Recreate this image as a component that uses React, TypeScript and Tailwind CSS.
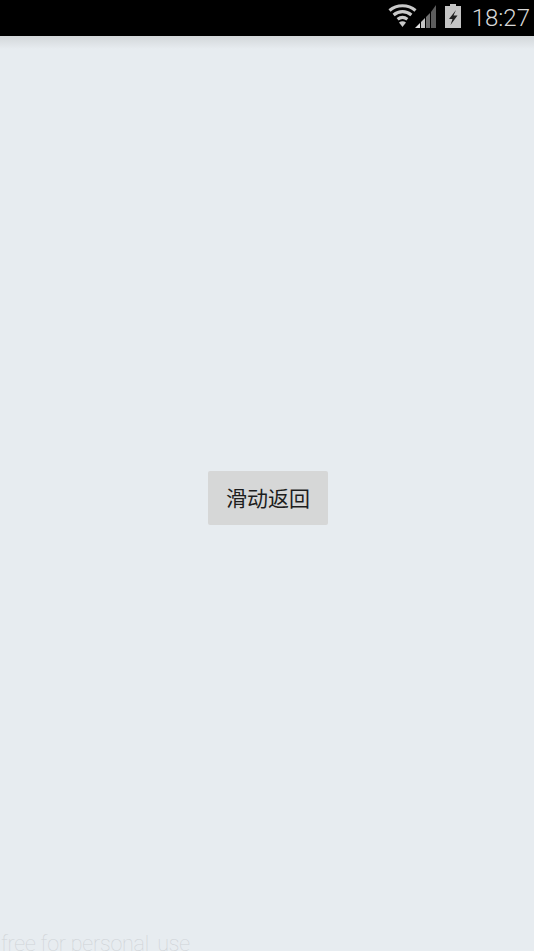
export default function App() {
  return (
    <div className="relative flex h-[951px] w-[534px] flex-col overflow-hidden bg-[#e7ecf0] font-['Roboto','Noto_Sans_CJK_SC',sans-serif]">
      <div className="flex h-[36px] shrink-0 items-start justify-end bg-black pt-[4px] pr-[4px]">
        <svg width="30" height="24" viewBox="0 0 30 24" className="mr-[-3px]">
          <g fill="none" stroke="#c9c9c9" strokeWidth="3.2">
            <path d="M1.5 6.5 C9 0.2 20 0.2 27.5 6.5" />
            <path d="M5.6 11 C11 6.6 18 6.6 23.4 11" />
            <path d="M9.6 15.3 C12.6 13 16.4 13 19.4 15.3" />
          </g>
          <path d="M11 18.4 C13.2 16.8 15.8 16.8 18 18.4 L14.5 23 Z" fill="#c9c9c9" />
        </svg>
        <svg width="22" height="24" viewBox="0 0 22 24">
          <path d="M0 24 L5 19 V24 Z" fill="#e4e4e4" />
          <path d="M6 18 L10 14 V24 H6 Z" fill="#c4c4c4" />
          <path d="M11 13 L15 9 V24 H11 Z" fill="#6f6f6f" />
          <path d="M16 8 L21 1 V24 H16 Z" fill="#5c5c5c" />
        </svg>
        <svg width="16" height="24" viewBox="0 0 16 24" className="ml-[8px]">
          <path d="M5 2 V0 H11 V2 H16 V24 H0 V2 Z" fill="#c4c4c4" />
          <path d="M11 6 L4 15 H7.5 L5.5 21 L12.5 11.5 H8.5 Z" fill="#1f1f1f" />
        </svg>
        <span className="mt-[2px] ml-[11px] text-[24px] leading-[24px] font-light text-[#d8d8d8]">18:27</span>
      </div>
      <div className="relative flex flex-1 justify-center bg-[#e7ecf0] pt-[435px] pl-[2px]">
        <div className="absolute inset-x-0 top-0 h-[13px] bg-gradient-to-b from-[#d3d7da] to-[#e7ecf0]" />
        <button className="flex h-[54px] w-[120px] items-center justify-center rounded-[2px] bg-[#d6d7d7] text-[21px] text-[#1d1d1d] font-['Noto_Sans_CJK_SC',sans-serif]">
          滑动返回
        </button>
        <span className="absolute bottom-[-8px] left-[1px] whitespace-nowrap text-[21.5px] leading-[30px] tracking-[-0.2px] font-thin text-[#cfd3d7]">
          free for persona<span className="tracking-[3px]">l</span> use
        </span>
      </div>
    </div>
  );
}
